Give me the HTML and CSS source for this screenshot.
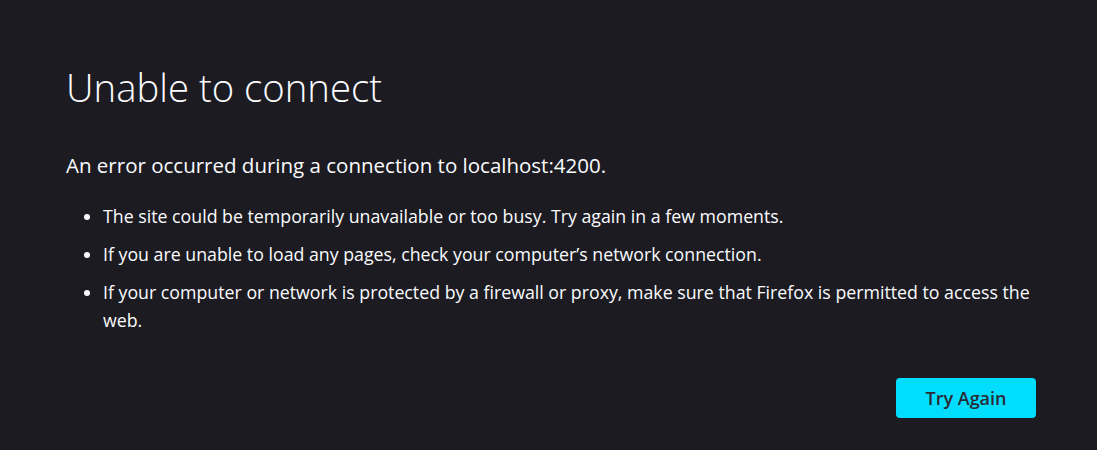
FILE: index.html
```html
<!DOCTYPE html>
<html lang="en">
<head>
<meta charset="utf-8">
<title>Problem loading page</title>
<link rel="stylesheet" href="styles.css">
</head>
<body>
<main class="container">
  <h1 class="title">Unable to connect</h1>
  <p class="short-desc">An error occurred during a connection to localhost:4200.</p>
  <ul class="details">
    <li>The site could be temporarily unavailable or too busy. Try again in a few moments.</li>
    <li>If you are unable to load any pages, check your computer’s network connection.</li>
    <li>If your computer or network is protected by a firewall or proxy, make sure that Firefox is permitted to access the web.</li>
  </ul>
  <div class="actions">
    <button class="btn-primary" type="button">Try Again</button>
  </div>
</main>
</body>
</html>
```
FILE: styles.css
```css
html, body {
  margin: 0;
  padding: 0;
  background: #1c1b22;
  color: #fbfbfe;
  font-family: "Open Sans", "Noto Sans", sans-serif;
}

body {
  min-height: 450px;
}

.container {
  width: 970px;
  padding: 63px 0 0 66px;
  box-sizing: content-box;
}

.title {
  margin: 0;
  font-size: 38.3px;
  line-height: 48px;
  font-weight: 300;
}

.short-desc {
  margin: 40px 0 0;
  font-size: 20.5px;
  line-height: 28px;
}

.details {
  margin: 23px 0 0;
  padding-left: 37px;
  font-size: 17.75px;
  line-height: 28px;
}

.details li {
  margin-bottom: 10px;
}

.details li:last-child {
  margin-bottom: 0;
}

.actions {
  display: flex;
  justify-content: flex-end;
  margin-top: 44px;
}

.btn-primary {
  width: 140px;
  height: 40px;
  border: none;
  border-radius: 4px;
  background: #00ddff;
  color: #2b2a33;
  font-family: inherit;
  font-size: 18px;
  font-weight: 600;
  padding: 0;
}
```
